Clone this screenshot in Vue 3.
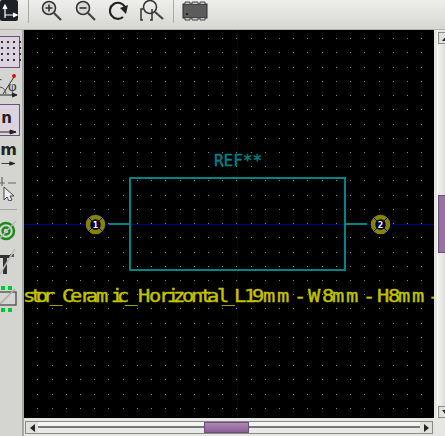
<template>
  <div class="window">
    <div class="top-toolbar">
      <div class="tool-dark">
        <svg width="18" height="22" viewBox="0 0 18 22">
          <rect x="0" y="0" width="18" height="21" rx="2" fill="#1d2126" />
          <path d="M5 18V6M3 9l2-4 2 4M5 15H16M13 13l4 2-4 2" stroke="#fff" stroke-width="1.2" fill="#fff" />
        </svg>
      </div>
      <div class="sep sep-a"></div>
      <svg class="zoom-icon" width="22" height="22" viewBox="0 0 22 22">
        <circle cx="8" cy="8" r="6.5" fill="#d8d8d4" stroke="#333" stroke-width="1.6" />
        <path d="M13 13l7 7" stroke="#444" stroke-width="2.2" />
        <path d="M4.5 8h7M8 4.500v7" stroke="#333" stroke-width="1.6" />
      </svg>
      <svg class="zoom-icon" width="22" height="22" viewBox="0 0 22 22">
        <circle cx="8" cy="8" r="6.5" fill="#d8d8d4" stroke="#333" stroke-width="1.6" />
        <path d="M13 13l7 7" stroke="#444" stroke-width="2.2" />
        <path d="M4.500 8h7" stroke="#333" stroke-width="1.6" />
      </svg>
      <svg class="zoom-icon" width="22" height="22" viewBox="0 0 22 22">
        <path d="M14 17A8 8 0 1 1 16 7" fill="none" stroke="#222" stroke-width="2.200" />
        <path d="M11 8L19 5L17 14z" fill="#222" />
      </svg>
      <svg class="zoom-fit" width="26" height="24" viewBox="0 0 26 24">
        <circle cx="10" cy="8" r="6.500" fill="none" stroke="#333" stroke-width="1.500" />
        <path d="M15 13l8 7" stroke="#444" stroke-width="2.200" />
        <path d="M3 10H1v11h2M12 10v11h-2" fill="none" stroke="#333" stroke-width="1.500" />
      </svg>
      <div class="sep sep-b"></div>
      <svg class="chip" width="26" height="20" viewBox="0 0 26 20">
        <rect x="1" y="3" width="24" height="14" fill="#5c5c5c" stroke="#2c2c2c" />
        <path d="M3 3V1h5v2M10 3V1h6v2M18 3V1h5v2M3 17v2h5v-2M10 17v2h6v-2M18 17v2h5v-2" fill="#ccc" stroke="#444" />
        <rect x="4" y="12" width="2" height="2" fill="#222" />
      </svg>
    </div>

    <div class="middle">
      <div class="left-toolbar">
        <div class="toggle toggle-grid">
          <span v-for="n in 16" :key="n" class="grid-dot"></span>
        </div>
        <div class="polar">
          <svg width="22" height="30" viewBox="0 0 22 30">
            <path d="M0 25H16M12 23l5 2-5 2" stroke="#222" fill="#222" />
            <path d="M3 24L14 7" stroke="#333" />
            <path d="M0 17a7 7 0 0 1 6 7" stroke="#555" fill="none" />
            <circle cx="14" cy="6" r="2" fill="#e01010" />
            <text x="-3" y="15" class="polar-r">r</text>
            <text x="8" y="21" class="polar-phi">φ</text>
          </svg>
        </div>
        <div class="toggle toggle-unit">
          <span class="unit-label">n</span>
          <svg width="17" height="6" viewBox="0 0 17 6"><path d="M0 3H16M10 1l6 2-6 2z" stroke="#222" fill="#222" /></svg>
        </div>
        <div class="unit-plain">
          <span class="unit-label">mm</span>
          <svg width="17" height="6" viewBox="0 0 17 6"><path d="M0 3H16M10 1l6 2-6 2z" stroke="#222" fill="#222" /></svg>
        </div>
        <svg class="cursor" width="22" height="24" viewBox="0 0 22 24">
          <path d="M0 6h5M16 6h-8M2 0v9" stroke="#666" stroke-width="1.200" fill="none" />
          <path d="M4 10v13l3-3 2 4 3-1-2-4h4z" fill="#eee" stroke="#444" />
        </svg>
        <div class="left-sep"></div>
        <svg class="ring" width="22" height="24" viewBox="0 0 22 24">
          <circle cx="6" cy="13" r="8" fill="none" stroke="#1d8a1d" stroke-width="2.500" />
          <circle cx="6" cy="13" r="3.500" fill="none" stroke="#1d8a1d" stroke-width="2.500" />
          <path d="M0 20L16 3" stroke="#bbb" stroke-width="1.500" />
        </svg>
        <svg class="tee" width="22" height="30" viewBox="0 0 22 30">
          <path d="M0 8H10v3H7V27H3V11H0z" fill="#333" />
          <path d="M10 7h4v3h-4z" fill="#555" />
          <path d="M0 27L15 2" stroke="#bbb" stroke-width="1.500" />
        </svg>
        <svg class="zone" width="22" height="26" viewBox="0 0 22 26">
          <rect x="1" y="0" width="4" height="4" fill="#00c832" />
          <rect x="8" y="0" width="4" height="4" fill="#00c832" />
          <rect x="1" y="22" width="4" height="4" fill="#00c832" />
          <rect x="8" y="22" width="4" height="4" fill="#00c832" />
          <rect x="-1" y="6" width="17" height="13" fill="#d4d4d0" stroke="#555" stroke-width="1.400" />
          <path d="M0 18L15 3" stroke="#aaa" stroke-width="1.500" />
        </svg>
      </div>

      <svg class="canvas" width="410" height="388" viewBox="24 30 410 388">
        <rect x="24" y="30" width="410" height="388" fill="#000" />
        <rect v-for="d in dots" :key="d.id" :x="d.x" :y="d.y" width="1" height="1" fill="#8c8c8c" />
        <path d="M237.500 30V418" stroke="#00005c" />
        <path d="M24 224.500H434" stroke="#000090" />
        <path d="M130 178H345V270H130zM109 224H130M345 224H367" fill="none" stroke="#008484" stroke-width="2" />
        <text x="214" y="166" class="ref" textLength="48" lengthAdjust="spacingAndGlyphs">REF**</text>
        <g v-for="pad in pads" :key="pad.label">
          <circle :cx="pad.x" cy="224.500" r="7.500" fill="none" stroke="#848400" stroke-width="4.500" />
          <path :d="`M${pad.x - 9} 215.500l18 18M${pad.x + 9} 215.500l-18 18`" stroke="#000090" />
          <text :x="pad.x" y="228" class="pad-num">{{ pad.label }}</text>
        </g>
        <text :x="nameX" y="302" class="fp-name" transform="scale(1.2 1)">stor_Ceramic_Horizontal_L19mm-W8mm-H8mm-</text>
      </svg>

      <div class="vscroll">
        <div class="vbtn"><span class="arrow-up"></span></div>
        <div class="vtrack vtrack-a"></div>
        <div class="vthumb"></div>
        <div class="vtrack vtrack-b"></div>
        <div class="vbtn"><span class="arrow-down"></span></div>
      </div>
    </div>

    <div class="bottom">
      <div class="left-stub"></div>
      <div class="hscroll">
        <div class="hbtn"><span class="arrow-left"></span></div>
        <div class="htrack htrack-a"></div>
        <div class="hthumb"></div>
        <div class="htrack htrack-b"></div>
        <div class="hbtn"><span class="arrow-right"></span></div>
      </div>
    </div>
  </div>
</template>

<script setup>
const dots = []
for (let i = 0; i < 28; i++) {
  for (let j = 0; j < 28; j++) {
    const x = Math.round(37.3 + i * 14.22)
    const y = Math.round(38.2 + j * 14.22)
    if (x < 434 && y < 418) dots.push({ id: `${i}-${j}`, x, y })
  }
}

const pads = [
  { x: 95.5, label: '1' },
  { x: 380.5, label: '2' }
]

// the stroke font is not monospaced, so each glyph gets its own x
// (divided by the text's horizontal scale)
const nameX = [
  24, 31, 37, 44, 51, 63, 71, 81, 87, 97, 112, 118, 126, 139, 150, 160, 168, 174, 183, 192,
  201, 208, 218, 223, 235, 245, 253, 264, 278, 295, 309, 323, 333, 347, 364, 378, 389, 399, 413, 429
].map((x) => ((x - 1) / 1.2).toFixed(1)).join(' ')
</script>

<style>
html, body {
  margin: 0;
  background: #e6e6e2;
  overflow: hidden;
}
</style>

<style scoped>
.window {
  width: 445px;
  height: 436px;
  display: flex;
  flex-direction: column;
  background: #e6e6e2;
  font-family: "DejaVu Sans", sans-serif;
  overflow: hidden;
}

.top-toolbar {
  height: 30px;
  box-sizing: border-box;
  display: flex;
  align-items: flex-start;
  background: linear-gradient(#eeeeec, #d6d6d2);
  border-bottom: 1px solid #b4b4b0;
  flex: none;
}

.tool-dark {
  height: 22px;
}

.sep {
  width: 1px;
  height: 23px;
  background: #a8a8a4;
}

.sep-a {
  margin-left: 10px;
}

.zoom-icon {
  margin-left: 12px;
}

.zoom-fit {
  margin-left: 9px;
  margin-top: -1px;
}

.sep-b {
  margin-left: 7px;
}

.chip {
  margin-left: 8px;
  margin-top: 1px;
}

.middle {
  display: flex;
  height: 388px;
  flex: none;
}

.left-toolbar {
  width: 22px;
  flex: none;
  display: flex;
  flex-direction: column;
  background: #d4d4d0;
  border-right: 2px solid #a6a6a2;
  padding-top: 6px;
}

.left-toolbar > * {
  flex: none;
}

.toggle {
  box-sizing: border-box;
  width: 20px;
  height: 32px;
  background: #dcd3e0;
  border: 1px solid #6d4f7c;
  border-left: none;
}

.toggle-grid {
  display: grid;
  grid-template-columns: repeat(4, 2px);
  grid-auto-rows: 2px;
  gap: 4px;
  padding: 4px 0 0 1px;
}

.grid-dot {
  background: #333;
}

.polar {
  height: 36px;
  padding-top: 2px;
  box-sizing: border-box;
}

.polar-r {
  font: 13px "Liberation Serif", serif;
  fill: #222;
}

.polar-phi {
  font: 15px "Liberation Serif", serif;
  fill: #333;
}

.toggle-unit,
.unit-plain {
  display: flex;
  flex-direction: column;
  align-items: flex-end;
}

.toggle-unit {
  padding: 5px 2px 0 0;
}

.unit-plain {
  width: 17px;
  height: 24px;
  margin-top: 6px;
}

.unit-label {
  font-size: 16px;
  font-weight: 700;
  line-height: 16px;
  color: #222;
  margin-bottom: 3px;
  white-space: nowrap;
}

.toggle-unit .unit-label {
  font-size: 15px;
  margin-right: 5px;
}

.cursor {
  margin-top: 11px;
}

.left-sep {
  height: 1px;
  margin: 8px 5px 0 0;
  background: #a6a6a2;
}

.ring {
  margin-top: 8px;
}

.tee {
  margin-top: 5px;
}

.zone {
  margin-top: 9px;
}

.canvas {
  display: block;
  flex: none;
}

.ref {
  font: 16px "DejaVu Sans Mono", monospace;
  fill: #008484;
  stroke: #008484;
  stroke-width: 0.4;
}

.pad-num {
  font: bold 9px "DejaVu Sans Mono", monospace;
  fill: #fff;
  text-anchor: middle;
}

.fp-name {
  font: 17px "DejaVu Sans Mono", monospace;
  fill: #c2c200;
  stroke: #c2c200;
  stroke-width: 0.4;
}

.vscroll {
  margin-left: 3px;
  width: 8px;
  flex: none;
  box-sizing: border-box;
  padding-top: 2px;
  display: flex;
  flex-direction: column;
  border-left: 1px solid #fff;
}

.vbtn {
  height: 12px;
  flex: none;
  background: #e0e0dc;
  border: 1px solid #8a8a86;
  border-right: none;
  box-sizing: border-box;
}

.vtrack {
  background: linear-gradient(90deg, #f4f4f2, #dcdcd8);
}

.vtrack-a {
  height: 151px;
}

.vtrack-b {
  height: 153px;
}

.vthumb {
  height: 58px;
  box-sizing: border-box;
  background: #9a6fa4;
  border: 1px solid #6d4f7c;
  border-right: none;
}

.arrow-up,
.arrow-down {
  display: block;
  width: 0;
  height: 0;
  margin: 3px 0 0 3px;
  border-left: 4px solid transparent;
  border-right: 4px solid transparent;
}

.arrow-up {
  border-bottom: 5px solid #222;
}

.arrow-down {
  border-top: 5px solid #222;
}

.bottom {
  flex: 1;
  display: flex;
}

.left-stub {
  width: 22px;
  flex: none;
  background: #d4d4d0;
  border-right: 2px solid #a6a6a2;
}

.hscroll {
  margin: 3px 0 2px 1px;
  width: 408px;
  height: 13px;
  display: flex;
  border: 1px solid #8a8a86;
  box-sizing: border-box;
  background: #fff;
}

.hbtn {
  width: 12px;
  flex: none;
  background: #e0e0dc;
  display: flex;
  align-items: center;
  justify-content: center;
}

.htrack {
  background: linear-gradient(#f4f4f2 0 40%, #777 40% 55%, #e8e8e6 55%);
}

.htrack-a {
  width: 166px;
}

.htrack-b {
  width: 171px;
}

.hthumb {
  width: 45px;
  box-sizing: border-box;
  background: linear-gradient(#ae88b4, #8c5f96);
  border: 1px solid #6d4f7c;
}

.arrow-left,
.arrow-right {
  width: 0;
  height: 0;
  border-top: 4px solid transparent;
  border-bottom: 4px solid transparent;
}

.arrow-left {
  border-right: 5px solid #222;
}

.arrow-right {
  border-left: 5px solid #222;
}
</style>
